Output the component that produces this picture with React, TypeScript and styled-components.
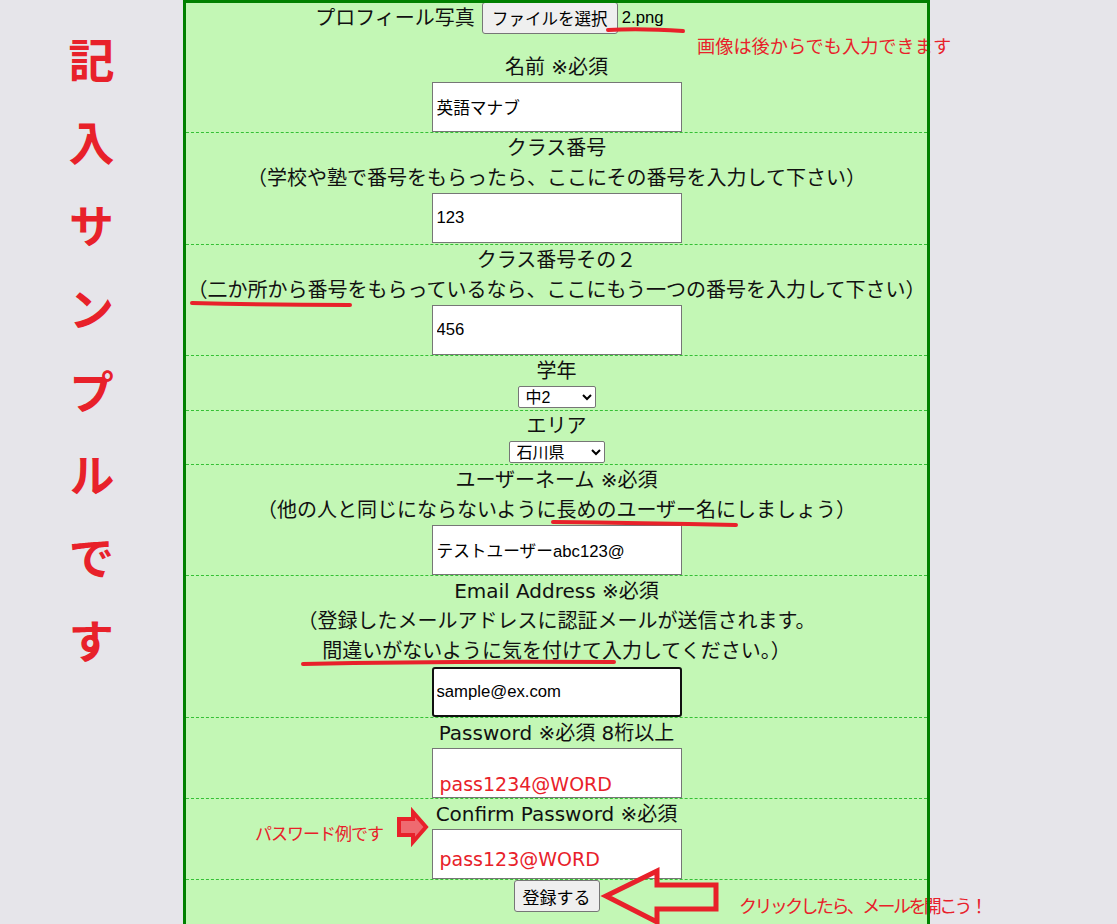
import React from "react";
import styled, { createGlobalStyle } from "styled-components";

const RED = "#e8212a";
const LABEL_FONT = `"DejaVu Sans", "Noto Sans CJK JP", sans-serif`;
const FIELD_FONT = `"Liberation Sans", "Noto Sans CJK JP", sans-serif`;
const UI_FONT = `"Noto Sans CJK JP", sans-serif`;

const GlobalStyle = createGlobalStyle`
  html, body {
    margin: 0;
    padding: 0;
    background: #e6e5ea;
    overflow: hidden;
  }
`;

const Page = styled.div`
  position: relative;
  display: flex;
  align-items: flex-start;
  width: 1117px;
  height: 924px;
  overflow: hidden;
  background: #e6e5ea;
`;

const SideColumn = styled.div`
  flex: none;
  width: 183px;
  display: flex;
  justify-content: center;
  padding-top: 37px;
`;

const SideTitle = styled.h1`
  margin: 0;
  writing-mode: vertical-rl;
  font-family: ${UI_FONT};
  font-weight: 700;
  font-size: 46px;
  line-height: 1;
  letter-spacing: 37px;
  color: ${RED};
`;

const Panel = styled.form`
  position: relative;
  flex: none;
  width: 741px;
  min-height: 960px;
  border: 3px solid #008000;
  border-bottom: none;
  background: #c3f7b5;
  font-family: ${LABEL_FONT};
  font-size: 20px;
  color: #111;

  &::after {
    content: "";
    position: absolute;
    top: -3px;
    left: -3px;
    right: -3px;
    bottom: 0;
    border: 3px solid #008000;
    border-bottom: none;
    pointer-events: none;
    z-index: 2;
  }
`;

const Section = styled.div<{ $first?: boolean; $padBottom?: number }>`
  display: flex;
  flex-direction: column;
  align-items: center;
  padding-bottom: ${(p) => p.$padBottom ?? 0}px;
  border-top: ${(p) => (p.$first ? "none" : "1px dashed #35c035")};
`;

const Label = styled.div`
  line-height: 30px;
  white-space: nowrap;
`;

const FileRow = styled.div`
  display: flex;
  align-items: center;
  justify-content: center;
  gap: 7px;
  height: 32px;
  margin-top: -1px;
  margin-bottom: 18px;
`;

const FileControl = styled.div`
  display: flex;
  align-items: center;
  gap: 4px;
  width: 316px;
`;

const PlainButton = styled.button<{ $width: number; $size: number }>`
  box-sizing: border-box;
  width: ${(p) => p.$width}px;
  height: 32px;
  margin: 0;
  padding: 0;
  border: 1px solid #767676;
  border-radius: 3px;
  background: #efefef;
  color: #000;
  font-family: ${UI_FONT};
  font-size: ${(p) => p.$size}px;
  line-height: 1;
`;

const FileName = styled.span`
  font-family: ${FIELD_FONT};
  font-size: 16.7px;
  color: #000;
`;

type Tone = "plain" | "focus" | "example";

const TextInput = styled.input<{ $tone?: Tone; $padTop?: number }>`
  box-sizing: border-box;
  width: 250px;
  height: 50px;
  margin: 0;
  padding: ${(p) => p.$padTop ?? 0}px 4px 0;
  border: 1px solid #767676;
  border-radius: 0;
  background: #fff;
  color: #000;
  font-family: ${FIELD_FONT};
  font-size: 16.7px;
  outline: none;

  ${(p) =>
    p.$tone === "focus" &&
    `
    margin-top: 1px;
    border: 2px solid #101010;
    border-radius: 3px;
    padding: 0 3px;
  `}

  ${(p) =>
    p.$tone === "example" &&
    `
    color: ${RED};
    font-family: "DejaVu Sans", sans-serif;
    font-size: 19px;
    padding-left: 7px;
  `}
`;

const Select = styled.select<{ $width: number; $gap: number }>`
  box-sizing: border-box;
  width: ${(p) => p.$width}px;
  height: 22px;
  margin: 0 0 ${(p) => p.$gap}px;
  padding: 0 0 0 3px;
  border: 1px solid #767676;
  border-radius: 2px;
  background: #fff;
  color: #000;
  font-family: ${FIELD_FONT};
  font-size: 16px;
`;

const Note = styled.span<{ $x: number; $y: number; $size: number; $spacing?: number }>`
  position: absolute;
  left: ${(p) => p.$x}px;
  top: ${(p) => p.$y}px;
  z-index: 1;
  font-family: ${UI_FONT};
  font-size: ${(p) => p.$size}px;
  letter-spacing: ${(p) => p.$spacing ?? 0}px;
  line-height: 1;
  white-space: nowrap;
  color: ${RED};
`;

const Overlay = styled.svg`
  position: absolute;
  left: 0;
  top: 0;
  width: 1117px;
  height: 924px;
  pointer-events: none;
  z-index: 1;
`;

export default function App() {
  return (
    <>
      <GlobalStyle />
      <Page>
        <SideColumn>
          <SideTitle>記入サンプルです</SideTitle>
        </SideColumn>

        <Panel onSubmit={(e) => e.preventDefault()}>
          <Section $first>
            <FileRow>
              <Label>プロフィール写真</Label>
              <FileControl>
                <PlainButton type="button" $width={136} $size={16.5}>
                  ファイルを選択
                </PlainButton>
                <FileName>2.png</FileName>
              </FileControl>
            </FileRow>
            <Label>名前 ※必須</Label>
            <TextInput defaultValue="英語マナブ" />
          </Section>

          <Section $padBottom={1}>
            <Label>クラス番号</Label>
            <Label>（学校や塾で番号をもらったら、ここにその番号を入力して下さい）</Label>
            <TextInput defaultValue="123" />
          </Section>

          <Section>
            <Label>クラス番号その２</Label>
            <Label>（二か所から番号をもらっているなら、ここにもう一つの番号を入力して下さい）</Label>
            <TextInput defaultValue="456" />
          </Section>

          <Section>
            <Label>学年</Label>
            <Select $width={78} $gap={2} defaultValue="中2">
              <option>中1</option>
              <option>中2</option>
              <option>中3</option>
            </Select>
          </Section>

          <Section>
            <Label>エリア</Label>
            <Select $width={96} $gap={1} defaultValue="石川県">
              <option>富山県</option>
              <option>石川県</option>
              <option>福井県</option>
            </Select>
          </Section>

          <Section>
            <Label>ユーザーネーム ※必須</Label>
            <Label>（他の人と同じにならないように長めのユーザー名にしましょう）</Label>
            <TextInput defaultValue="テストユーザーabc123@" />
          </Section>

          <Section>
            <Label>Email Address ※必須</Label>
            <Label>（登録したメールアドレスに認証メールが送信されます。</Label>
            <Label>間違いがないように気を付けて入力してください。）</Label>
            <TextInput $tone="focus" defaultValue="sample@ex.com" />
          </Section>

          <Section>
            <Label>Password ※必須 8桁以上</Label>
            <TextInput $tone="example" $padTop={21} defaultValue="pass1234@WORD" />
          </Section>

          <Section>
            <Label>Confirm Password ※必須</Label>
            <TextInput $tone="example" $padTop={9} defaultValue="pass123@WORD" />
          </Section>

          <Section>
            <PlainButton type="submit" $width={86} $size={17}>
              登録する
            </PlainButton>
          </Section>
        </Panel>

        <Note $x={697} $y={36} $size={18.2}>
          画像は後からでも入力できます
        </Note>
        <Note $x={255} $y={824} $size={17} $spacing={-1}>
          パスワード例です
        </Note>
        <Note $x={739} $y={896} $size={18} $spacing={-2.6}>
          クリックしたら、メールを開こう！
        </Note>

        <Overlay viewBox="0 0 1117 924">
          <g fill="none" stroke={RED} strokeWidth={4} strokeLinecap="round">
            <path d="M608 30 Q 640 28 683 31" />
            <path d="M192 303 Q 270 305 350 305" />
            <path d="M553 522 Q 640 523 736 525" />
            <path d="M303 664 Q 450 661 614 662" />
          </g>
          <polygon
            points="606,896 657,871 657,885 716,885 716,909 657,909 657,922"
            fill="none"
            stroke={RED}
            strokeWidth={5}
            strokeLinejoin="miter"
          />
          <polygon
            points="399,819 413,819 413,812 426,827 413,842 413,835 399,835"
            fill="#ef6a70"
            stroke={RED}
            strokeWidth={4}
            strokeLinejoin="miter"
          />
        </Overlay>
      </Page>
    </>
  );
}
